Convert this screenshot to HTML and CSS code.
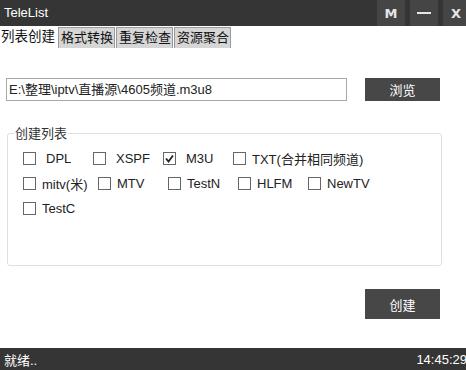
FILE: index.html
```html
<!DOCTYPE html>
<html lang="zh">
<head>
<meta charset="utf-8">
<title>TeleList</title>
<link rel="stylesheet" href="styles.css">
</head>
<body>
<div class="app">
  <header class="titlebar">
    <span class="title">TeleList</span>
    <div class="winbtns">
      <span class="winbtn">M</span>
      <span class="winbtn minus"><span class="dash"></span></span>
      <span class="winbtn">X</span>
    </div>
  </header>
  <nav class="tabs">
    <span class="tab active">列表创建</span>
    <span class="tab">格式转换</span>
    <span class="tab">重复检查</span>
    <span class="tab">资源聚合</span>
  </nav>
  <main class="content">
    <div class="pathrow">
      <div class="pathinput">E:\整理\iptv\直播源\4605频道.m3u8</div>
      <button class="btn">浏览</button>
    </div>
    <fieldset class="group">
      <legend>创建列表</legend>
      <div class="row r1">
        <label class="chk w70"><span class="box"></span><span class="lbl sp">DPL</span></label>
        <label class="chk w70"><span class="box"></span><span class="lbl sp">XSPF</span></label>
        <label class="chk w70"><span class="box checked"><svg width="11" height="11" viewBox="0 0 11 11"><path d="M2 5.5 L4.5 8.5 L9 2.5" fill="none" stroke="#222" stroke-width="1.8"/></svg></span><span class="lbl sp">M3U</span></label>
        <label class="chk"><span class="box"></span><span class="lbl">TXT(合并相同频道)</span></label>
      </div>
      <div class="row r2">
        <label class="chk w75"><span class="box"></span><span class="lbl">mitv(米)</span></label>
        <label class="chk w70"><span class="box"></span><span class="lbl">MTV</span></label>
        <label class="chk w70"><span class="box"></span><span class="lbl">TestN</span></label>
        <label class="chk w70"><span class="box"></span><span class="lbl">HLFM</span></label>
        <label class="chk"><span class="box"></span><span class="lbl">NewTV</span></label>
      </div>
      <div class="row r3">
        <label class="chk"><span class="box"></span><span class="lbl">TestC</span></label>
      </div>
    </fieldset>
    <div class="actions">
      <button class="btn big">创建</button>
    </div>
  </main>
  <footer class="statusbar">
    <span>就绪..</span>
    <span class="time">14:45:29</span>
  </footer>
</div>
</body>
</html>
```

FILE: styles.css
```css
* { box-sizing: border-box; }
html, body { margin: 0; padding: 0; background: #fff; }
body {
  font-family: "Liberation Sans", "Noto Sans CJK SC", sans-serif;
  font-size: 13px;
  color: #222;
}
.app {
  width: 466px;
  height: 370px;
  display: flex;
  flex-direction: column;
  overflow: hidden;
}
.titlebar {
  height: 26px;
  background: #353535;
  display: flex;
  align-items: stretch;
  justify-content: space-between;
  color: #fff;
  flex: none;
}
.title {
  padding-left: 4px;
  font-size: 13px;
  line-height: 26px;
}
.winbtns {
  display: flex;
  gap: 5px;
}
.winbtn {
  width: 28px;
  background: #454545;
  color: #e6e6e6;
  font-family: "DejaVu Sans", sans-serif;
  font-weight: bold;
  font-size: 13px;
  display: flex;
  align-items: center;
  justify-content: center;
}
.winbtn:last-child { width: 23px; justify-content: flex-start; padding-left: 8px; }
.dash { width: 14px; height: 2px; background: #e6e6e6; }
.tabs {
  display: flex;
  align-items: flex-end;
  height: 22px;
  flex: none;
}
.tab {
  height: 21px;
  padding: 0 1px 0 2px;
  background: #d6d6d6;
  border: 1px solid #9a9a9a;
  border-bottom: none;
  margin-left: 1px;
  line-height: 19px;
  font-size: 13px;
  color: #111;
}
.tab.active {
  height: 22px;
  background: #fff;
  border-color: #fff;
  margin-left: 0;
  padding: 0 1px 0 0;
  font-size: 13.5px;
  line-height: 20px;
}
.content {
  flex: 1;
  padding: 30px 26px 0 6px;
  display: flex;
  flex-direction: column;
}
.pathrow {
  display: flex;
  align-items: center;
  gap: 18px;
  height: 23px;
}
.pathinput {
  width: 341px;
  height: 23px;
  border: 1px solid #a8a8a8;
  padding-left: 2px;
  line-height: 21px;
  white-space: nowrap;
  overflow: hidden;
}
.btn {
  width: 75px;
  height: 23px;
  border: none;
  background: #474747;
  color: #fff;
  font-family: "Noto Sans CJK SC", sans-serif;
  font-size: 13px;
  padding: 0;
}
.btn.big { height: 30px; }
.group {
  margin: 24px 0 0 1px;
  width: 435px;
  height: 141px;
  border: 1px solid #dde1e6;
  border-radius: 3px;
  padding: 4px 0 0 15px;
}
.group legend {
  padding: 0 1px;
  margin-left: -9px;
  font-size: 13px;
  line-height: 17px;
  color: #333;
}
.row {
  display: flex;
  align-items: center;
  height: 25px;
}
.chk {
  display: inline-flex;
  align-items: center;
  flex: none;
}
.w70 { width: 70px; }
.w75 { width: 75px; }
.box {
  width: 13px;
  height: 13px;
  border: 1px solid #666;
  background: #fff;
  display: inline-flex;
  align-items: center;
  justify-content: center;
  flex: none;
}
.lbl { margin-left: 6px; white-space: nowrap; }
.lbl.sp { margin-left: 10px; }
.actions {
  display: flex;
  justify-content: flex-end;
  margin-top: 23px;
}
.statusbar {
  height: 22px;
  flex: none;
  background: #353535;
  color: #fff;
  display: flex;
  justify-content: space-between;
  align-items: center;
  padding: 0 0 0 4px;
  font-size: 13px;
}
.time { margin-right: -1px; }
```
